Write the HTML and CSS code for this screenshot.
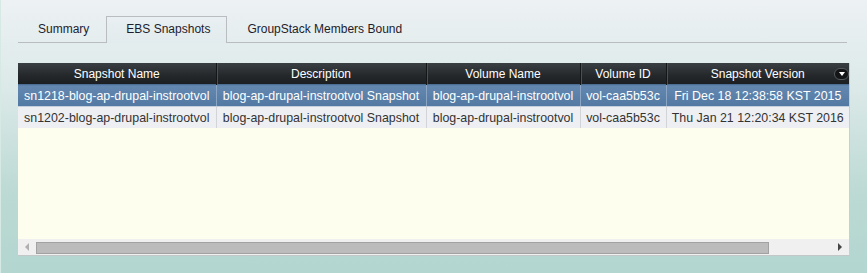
FILE: index.html
```html
<!DOCTYPE html>
<html lang="en">
<head>
    <meta charset="UTF-8">
    <title>EBS Snapshots</title>
    <link rel="stylesheet" href="styles.css">
</head>
<body>

    <div class="tabs">
        <div class="tab">Summary</div>
        <div class="tab active">EBS Snapshots</div>
        <div class="tab">GroupStack Members Bound</div>
    </div>

    <div class="grid">
        <table class="grid-table">
            <colgroup>
                <col style="width: 198px">
                <col style="width: 210px">
                <col style="width: 154px">
                <col style="width: 86px">
                <col>
            </colgroup>
            <thead>
                <tr>
                    <th>Snapshot Name</th>
                    <th>Description</th>
                    <th>Volume Name</th>
                    <th>Volume ID</th>
                    <th class="last-col">Snapshot Version <span class="col-menu"></span></th>
                </tr>
            </thead>
            <tbody>
                <tr class="selected">
                    <td>sn1218-blog-ap-drupal-instrootvol</td>
                    <td>blog-ap-drupal-instrootvol Snapshot</td>
                    <td>blog-ap-drupal-instrootvol</td>
                    <td>vol-caa5b53c</td>
                    <td>Fri Dec 18 12:38:58 KST 2015</td>
                </tr>
                <tr>
                    <td>sn1202-blog-ap-drupal-instrootvol</td>
                    <td>blog-ap-drupal-instrootvol Snapshot</td>
                    <td>blog-ap-drupal-instrootvol</td>
                    <td>vol-caa5b53c</td>
                    <td>Thu Jan 21 12:20:34 KST 2016</td>
                </tr>
            </tbody>
        </table>
        <div class="grid-empty"></div>
        <div class="hscroll">
            <span class="arrow arrow-left"></span>
            <div class="track"><div class="thumb"></div></div>
            <span class="arrow arrow-right"></span>
        </div>
    </div>

</body>
</html>
```

FILE: styles.css
```css
body {
    margin: 0;
    height: 273px;
    padding: 16px 0 0 18px;
    box-sizing: border-box;
    border-left: 1px solid #d6e9e5;
    background: linear-gradient(to bottom, #edf1f4 0px, #dbe9e8 90px, #bddad4 190px, #b3d6d0 273px);
    font-family: "Liberation Sans", Arial, sans-serif;
    color: #222;
    overflow: hidden;
}

/* tabs */
.tabs {
    display: flex;
    width: 829px;
    margin-left: -1px;
    border-bottom: 1px solid #b9bdbf;
}

.tab {
    height: 26px;
    line-height: 25px;
    padding: 0 16px 0 19px;
    font-size: 12px;
    color: #1d1d2c;
    border: 1px solid transparent;
    border-bottom: none;
    margin-bottom: -1px;
}

.tab.active {
    border-color: #b9bdbf;
    background: linear-gradient(#e9eff2, #e2ebed);
}

/* grid */
.grid {
    width: 832px;
    margin: 20px 0 0 -1px;
    background: #fdfeee;
    border-right: 1px solid #c9cfcf;
    border-bottom: 1px solid #c2c8c8;
    box-sizing: border-box;
}

.grid-table {
    width: 100%;
    table-layout: fixed;
    border-collapse: collapse;
    font-size: 12.4px;
}

.grid-table th {
    height: 21px;
    padding: 0;
    font-weight: normal;
    font-size: 12px;
    color: #fff;
    background: linear-gradient(#3a3f43, #24282b 60%, #1c1f22);
    border-left: 1px solid #141618;
    box-shadow: inset 1px 0 #4a4f53;
    white-space: nowrap;
}

.grid-table th:first-child {
    border-left: none;
    box-shadow: none;
}

.last-col {
    position: relative;
}

.col-menu {
    position: absolute;
    right: 0;
    top: 5px;
    width: 13px;
    height: 10px;
    border: 1px solid #55595c;
    border-radius: 6px;
    background: #131517;
}

.col-menu::after {
    content: "";
    position: absolute;
    left: 4px;
    top: 3px;
    border-left: 3px solid transparent;
    border-right: 3px solid transparent;
    border-top: 4px solid #fff;
}

.grid-table td {
    height: 21px;
    padding: 0 4px;
    text-align: center;
    white-space: nowrap;
    overflow: hidden;
    color: #333;
    background: #eeeff3;
    border-left: 1px solid #d2d4d8;
}

.grid-table td:first-child {
    border-left: none;
}

.grid-table tr.selected td {
    color: #fff;
    background: linear-gradient(#6488b0, #5279a3);
    border-left-color: #8ba6c4;
    border-top: 1px solid #4d6f96;
    border-bottom: 1px solid #c5cfdc;
}

.grid-empty {
    height: 111px;
}

/* horizontal scrollbar */
.hscroll {
    display: flex;
    align-items: center;
    height: 16px;
    background: #f0f0f0;
}

.arrow {
    width: 0;
    height: 0;
    border-top: 4px solid transparent;
    border-bottom: 4px solid transparent;
}

.arrow-left {
    margin: 0 7px 0 7px;
    border-right: 4px solid #b0b0b0;
}

.arrow-right {
    margin: 0 7px 0 auto;
    border-left: 4px solid #454545;
}

.track {
    flex: 1;
    height: 12px;
    margin-top: 1px;
}

.thumb {
    width: 733px;
    height: 12px;
    box-sizing: border-box;
    background: #bcbcbc;
    border: 1px solid #a2a2a2;
}
```
